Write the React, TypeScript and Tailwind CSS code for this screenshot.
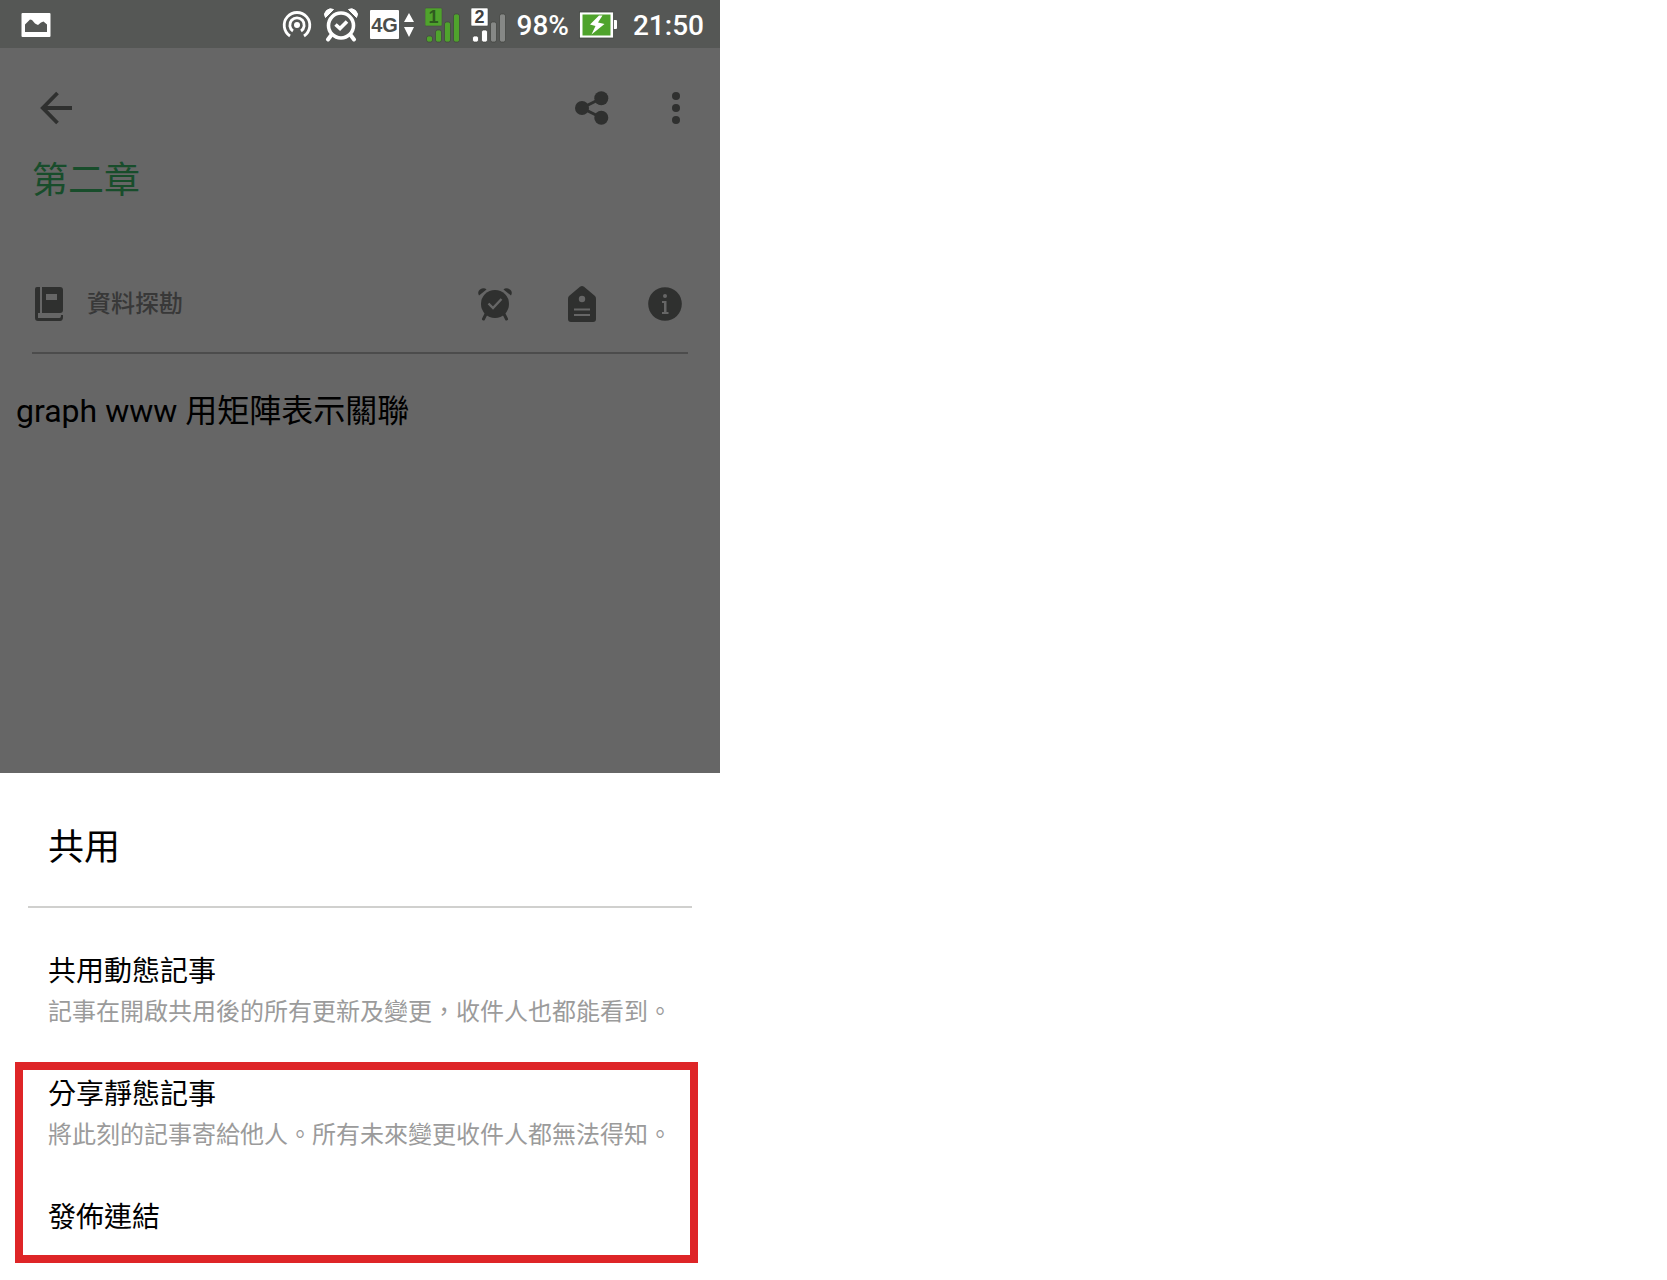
import React from "react";

const ink = "#2f302f";

function PictureIcon() {
  return (
    <svg width="30" height="24" viewBox="0 0 30 24" aria-hidden="true">
      <path
        fillRule="evenodd"
        fill="#fff"
        d="M1.500 0H28.500Q29.500 0 29.500 1V23Q29.500 24 28.500 24H1.500Q.5 24 .5 23V1Q.5 0 1.500 0ZM4 19H26V11.500L22.500 8.500L20 9.500L17 12L14 10.500L11 7L9 6.500L6.500 9L4 11.500Z"
      />
    </svg>
  );
}

function HotspotIcon() {
  return (
    <svg width="30" height="30" viewBox="0 0 30 30" fill="none" stroke="#fff" strokeWidth="2.8" aria-hidden="true">
      <circle cx="15" cy="15" r="3" fill="#fff" stroke="none" />
      <path d="M11 21A7.200 7.200 0 1 1 19 21" />
      <path d="M8 26A12.800 12.800 0 1 1 22 26" />
    </svg>
  );
}

function AlarmIcon() {
  return (
    <svg width="34" height="34" viewBox="0 0 34 34" fill="none" stroke="#fff" aria-hidden="true">
      <circle cx="17" cy="17.500" r="12.500" strokeWidth="3.600" />
      <path d="M11.500 16.500L16 20.500L23 13.500" strokeWidth="3.600" />
      <path d="M7 27.500L4 31.500M27 27.500L30 31.500" strokeWidth="4" strokeLinecap="round" />
      <path d="M1.500 9.500Q-1 6 2.500 2.500Q6-.5 9.500 1.500Z" fill="#fff" stroke="#fff" />
      <path d="M32.500 9.500Q35 6 31.500 2.500Q28-.5 24.500 1.500Z" fill="#fff" stroke="#fff" />
    </svg>
  );
}

function FourGIcon() {
  return (
    <svg width="45" height="30" viewBox="0 0 45 30" aria-label="4G">
      <rect width="29" height="29" rx="1" fill="#fff" />
      <text x="14.500" y="22" textAnchor="middle" fontFamily="Liberation Sans, sans-serif" fontWeight="700" fontSize="20" fill="#4b4d4b">
        4G
      </text>
      <path d="M34 12L39 3L44 12ZM34 17H44L39 27Z" fill="#fff" />
    </svg>
  );
}

function SignalIcon({ label, on, off, text, level }: { label: string; on: string; off: string; text: string; level: number }) {
  const bars = [6, 12, 20, 28];
  return (
    <svg width="36" height="36" viewBox="0 0 36 36" aria-label={`SIM ${label}`}>
      <rect x="0" y="1" width="17" height="18" rx="1" fill={on} stroke="#484b47" strokeWidth="0.6" />
      <text x="8.500" y="16" textAnchor="middle" fontFamily="Liberation Sans, sans-serif" fontWeight="700" fontSize="18" fill={text}>
        {label}
      </text>
      {bars.map((h, i) => (
        <rect key={h} x={1.5 + i * 9} y={35 - h} width="6" height={h} rx="2" fill={i < level ? on : off} stroke="#3f423e" strokeWidth="0.7" />
      ))}
    </svg>
  );
}

function BatteryIcon() {
  return (
    <svg width="40" height="28" viewBox="0 0 40 28" aria-hidden="true">
      <rect x="34" y="9" width="4" height="9" rx="1" fill="#fff" />
      <rect x="0.500" y="1" width="34" height="26" fill="#fff" stroke="#404540" strokeWidth="0.8" />
      <rect x="3.500" y="3.500" width="28" height="21" fill="#4fa32c" />
      <path d="M20 4.500L11 13.500L16.500 15L12.500 23.500L25.500 13L19 11.500L23.500 4.500Z" fill="#fff" />
    </svg>
  );
}

function BackIcon() {
  return (
    <svg width="34" height="34" viewBox="0 0 34 34" fill="none" stroke={ink} strokeWidth="3.800" aria-hidden="true">
      <path d="M17.500 2L2.800 17L17.500 32M3 17H32" />
    </svg>
  );
}

function ShareIcon() {
  return (
    <svg width="34" height="34" viewBox="0 0 34 34" fill={ink} aria-hidden="true">
      <path d="M26 7.500L7 17L26 26.500" fill="none" stroke={ink} strokeWidth="3" />
      <circle cx="7" cy="17" r="7" />
      <circle cx="26.300" cy="7.300" r="7" />
      <circle cx="26.300" cy="26.700" r="7" />
    </svg>
  );
}

function MoreIcon() {
  return (
    <svg width="8" height="32" viewBox="0 0 8 32" fill={ink} aria-hidden="true">
      <circle cx="4" cy="4" r="4" />
      <circle cx="4" cy="16" r="4" />
      <circle cx="4" cy="28" r="4" />
    </svg>
  );
}

function NotebookIcon() {
  return (
    <svg width="28" height="34" viewBox="0 0 28 34" aria-hidden="true">
      <path fill={ink} fillRule="evenodd" d="M7 0H25Q28 0 28 3V23Q28 26 25 26H7ZM11 7V13H22V7Z" />
      <path fill={ink} d="M2 0H5V26H3V31H24.500Q26 31 26 28H28V30Q28 34 25 34H3Q0 34 0 31V2Q0 0 2 0Z" />
    </svg>
  );
}

function ReminderIcon() {
  return (
    <svg width="34" height="34" viewBox="0 0 34 34" aria-hidden="true">
      <path d="M8 27L5.500 32M26 27L28.500 32" stroke={ink} strokeWidth="3" strokeLinecap="round" />
      <circle cx="17" cy="17" r="14" fill={ink} />
      <path d="M1 8.500Q-1 5 2 2.500Q6 0 8.500 2.500ZM33 8.500Q35 5 32 2.500Q28 0 25.500 2.500Z" fill={ink} />
      <path d="M10.500 16.500L15 21L23.500 12" fill="none" stroke="#666" strokeWidth="2.400" />
    </svg>
  );
}

function TagIcon() {
  return (
    <svg width="28" height="36" viewBox="0 0 28 36" aria-hidden="true">
      <path d="M12 .8Q14-.8 16 .8L27 10Q28 11 28 12.500V33Q28 36 25 36H3Q0 36 0 33V12.500Q0 11 1 10Z" fill={ink} />
      <circle cx="14" cy="13" r="3.200" fill="#666" />
      <path d="M6 23.500H22M6 29H22" stroke="#666" strokeWidth="1.800" />
    </svg>
  );
}

function InfoIcon() {
  return (
    <svg width="34" height="34" viewBox="0 0 34 34" aria-hidden="true">
      <circle cx="17" cy="17" r="16.800" fill={ink} />
      <circle cx="17" cy="9" r="2" fill="#666" />
      <path d="M14 14H18.500V25H20.500V27H14V25H16V16H14Z" fill="#666" />
    </svg>
  );
}

function ShareOption({ title, detail }: { title: string; detail?: string }) {
  return (
    <button type="button" className="block w-full text-left">
      <span className="block text-[28px] leading-10 text-black">{title}</span>
      {detail && <span className="block text-2xl leading-10 text-[#9b9b9b]">{detail}</span>}
    </button>
  );
}

export default function App() {
  return (
    <div className="min-h-screen bg-white">
      <div className="w-full max-w-[720px] font-[Roboto,'Noto_Sans_CJK_TC',sans-serif]">
        <div className="flex h-12 items-center justify-between bg-[#555755] pt-0.5 pr-4 pl-[21px] text-white">
          <PictureIcon />
          <div className="flex items-center gap-[10px] text-[28px] leading-8 font-medium">
            <div className="flex items-center gap-3">
              <HotspotIcon />
              <AlarmIcon />
              <FourGIcon />
            </div>
            <SignalIcon label="1" on="#4fa32c" off="#848684" text="#2f5a20" level={4} />
            <SignalIcon label="2" on="#ffffff" off="#868886" text="#3f413f" level={2} />
            <span className="pt-0.5">98%</span>
            <BatteryIcon />
            <time className="pt-0.5 pl-1">21:50</time>
          </div>
        </div>

        <main className="bg-[#666666] pb-[338px]">
          <header className="flex items-center justify-between pt-[43px] pr-10 pl-10">
            <button type="button" aria-label="返回">
              <BackIcon />
            </button>
            <div className="flex items-center gap-[63px]">
              <button type="button" aria-label="分享">
                <ShareIcon />
              </button>
              <button type="button" aria-label="更多">
                <MoreIcon />
              </button>
            </div>
          </header>
          <h1 className="px-8 pt-[30px] text-4xl leading-[52px] text-[#184d2b]">第二章</h1>
          <div className="mx-8 mt-[79px] flex items-center justify-between border-b-2 border-[#4c4c4c] pr-1.5 pb-[30px] pl-[3px]">
            <button type="button" className="flex items-center gap-6 text-2xl leading-9 font-medium text-[#383838]">
              <NotebookIcon />
              資料探勘
            </button>
            <div className="flex items-center gap-[52px]">
              <button type="button" aria-label="提醒" className="pr-1">
                <ReminderIcon />
              </button>
              <button type="button" aria-label="標籤">
                <TagIcon />
              </button>
              <button type="button" aria-label="資訊">
                <InfoIcon />
              </button>
            </div>
          </div>
          <p className="px-4 pt-[33px] text-[32px] leading-[48px] text-black">graph www 用矩陣表示關聯</p>
        </main>

        <section className="pt-[49px]">
          <h2 className="mx-7 border-b-2 border-[#d0d0ce] px-5 pb-8 text-4xl leading-[52px] text-black">共用</h2>
          <div className="px-12 pt-11 pb-[30px]">
            <ShareOption title="共用動態記事" detail="記事在開啟共用後的所有更新及變更，收件人也都能看到。" />
          </div>
          <div className="mr-[22px] ml-[15px] flex flex-col gap-[43px] border-8 border-[#de2527] pt-[5px] pb-[17px] pl-[25px]">
            <ShareOption title="分享靜態記事" detail="將此刻的記事寄給他人。所有未來變更收件人都無法得知。" />
            <ShareOption title="發佈連結" />
          </div>
        </section>
      </div>
    </div>
  );
}
